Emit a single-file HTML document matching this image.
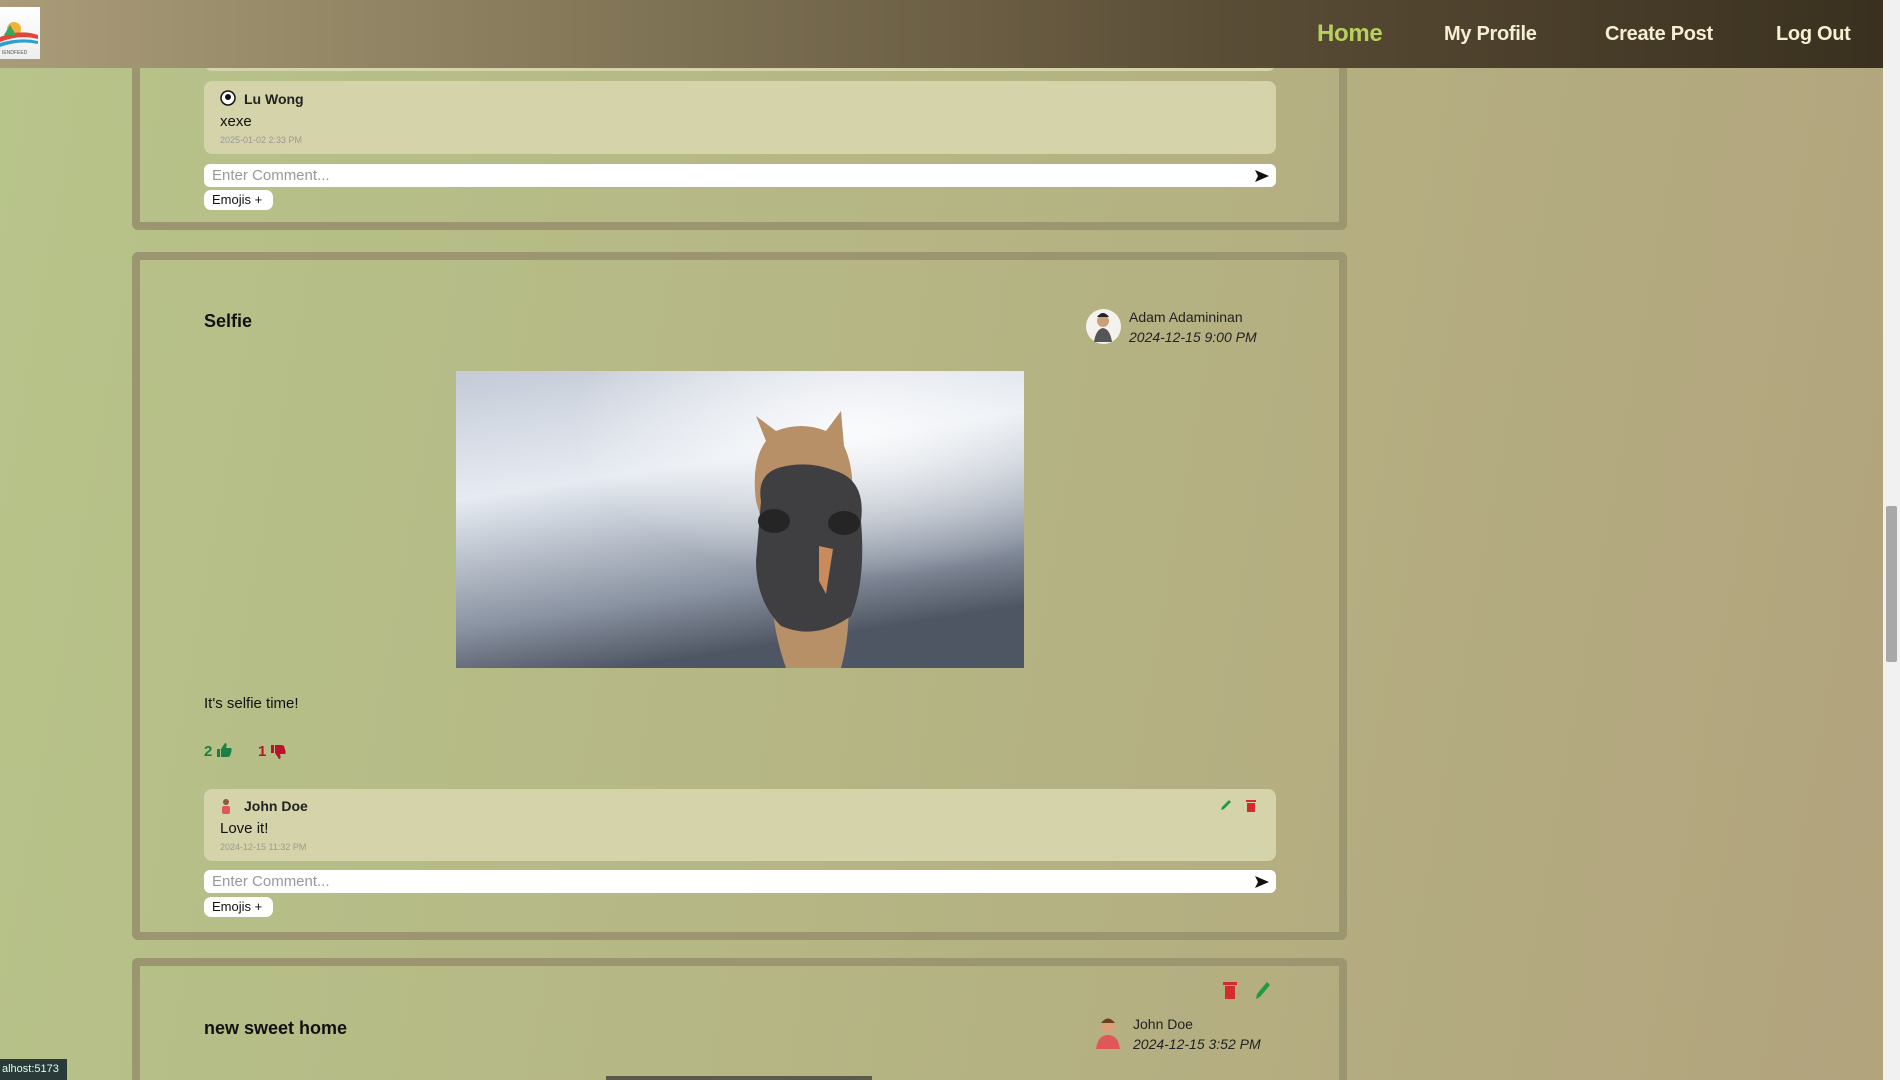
<!DOCTYPE html>
<html><head><meta charset="utf-8"><style>
*{margin:0;padding:0;box-sizing:border-box}
html,body{width:1900px;height:1080px;overflow:hidden}
body{font-family:"Liberation Sans",sans-serif;color:#111}
#w{position:relative;width:1900px;height:1080px;overflow:hidden;background:linear-gradient(100deg,#b7c48a 0%,#b5b684 45%,#b2a37d 100%)}
.nav{position:absolute;left:0;top:0;width:1883px;height:68px;z-index:10;background:linear-gradient(90deg,#aa9c79 0%,#85795a 30%,#5a4d36 65%,#3a301f 100%)}
.nav a{position:absolute;top:23px;font-size:20px;font-weight:bold;color:#f6f0d2;text-decoration:none;letter-spacing:-0.3px}
.logo{position:absolute;left:0;top:7px;width:40px;height:52px;background:linear-gradient(180deg,#fff,#eee)}
.sb{position:absolute;right:0;top:0;width:17px;height:1080px;background:#f1f1f1;z-index:11}
.thumb{position:absolute;left:3px;top:506px;width:11px;height:156px;background:#a8a8a8;border-radius:2px}
.card{position:absolute;left:132px;width:1215px;border:8px solid #9c9670;border-radius:6px}
.cbox{position:absolute;left:204px;width:1072px;background:#d4d3aa;border-radius:8px}
.cname{position:absolute;left:40px;font-size:14px;font-weight:bold;color:#222}
.ctext{position:absolute;left:16px;font-size:15px}
.cdate{position:absolute;left:16px;font-size:9px;color:#9a9a90}
.input{position:absolute;left:204px;width:1072px;height:23px;background:#fff;border-radius:6px;font-size:15px;color:#999;padding:3px 8px}
.input svg{position:absolute;right:6px;top:5px}
.emo{position:absolute;left:204px;width:69px;height:20px;background:#fff;border-radius:7px;font-size:13px;padding:2px 8px;color:#111}
.title{position:absolute;left:204px;font-size:18px;font-weight:bold}
.av{position:absolute;border-radius:50%;background:#f4f2ee}
.an{position:absolute;font-size:14px;color:#222}
.ad{position:absolute;font-size:14px;font-style:italic;color:#222}
</style></head><body><div id="w">
<div class="nav">
<div class="logo"><svg width="40" height="52"><circle cx="14" cy="22" r="7" fill="#f2b23a"/><path d="M0 30 Q20 22 38 28 L38 32 Q20 27 0 35Z" fill="#e0473a"/><path d="M0 36 Q20 30 38 34 L38 37 Q20 33 0 40Z" fill="#2d9fd0"/><path d="M4 28 L10 18 L16 28Z" fill="#3fa35a"/><text x="2" y="47" font-size="5" fill="#555">IENDFEED</text></svg></div>
<a style="left:1317px;color:#b7cf5c;font-size:24px;top:20px">Home</a>
<a style="left:1444px">My Profile</a>
<a style="left:1605px">Create Post</a>
<a style="left:1776px">Log Out</a>
</div>

<div class="card" style="top:-20px;height:250px"></div>
<div class="cbox" style="top:40px;height:31px"></div>
<div class="cbox" style="top:81px;height:73px">
<svg style="position:absolute;left:16px;top:9px" width="16" height="16"><circle cx="8" cy="8" r="7" fill="#fff" stroke="#111" stroke-width="1.5"/><circle cx="8" cy="7" r="3" fill="#111"/></svg>
<div class="cname" style="top:10px">Lu Wong</div>
<div class="ctext" style="top:32px">xexe</div>
<div class="cdate" style="top:54px">2025-01-02 2:33 PM</div>
</div>
<div class="input" style="top:164px">Enter Comment...<svg width="16" height="14"><path d="M1 1 L15 7 L1 13 L4 7Z" fill="#111"/></svg></div>
<div class="emo" style="top:190px">Emojis +</div>

<div class="card" style="top:252px;height:688px"></div>
<div class="title" style="top:311px">Selfie</div>
<div class="av" style="left:1086px;top:309px;width:35px;height:35px"><svg width="35" height="35"><circle cx="17" cy="12" r="6" fill="#c9a07a"/><path d="M11 8 Q17 0 23 8Z" fill="#222"/><path d="M8 33 Q10 20 17 19 Q24 20 26 33Z" fill="#555"/></svg></div>
<div class="an" style="left:1129px;top:309px">Adam Adamininan</div>
<div class="ad" style="left:1129px;top:329px">2024-12-15 9:00 PM</div>
<svg style="position:absolute;left:456px;top:371px" width="568" height="297"><defs><linearGradient id="s" x1="0" y1="0" x2="0.3" y2="1"><stop offset="0" stop-color="#c4cad6"/><stop offset=".4" stop-color="#e6ebf2"/><stop offset=".8" stop-color="#8a93a2"/><stop offset="1" stop-color="#4f5663"/></linearGradient><radialGradient id="c" cx=".7" cy=".2" r=".5"><stop offset="0" stop-color="#fff" stop-opacity=".8"/><stop offset="1" stop-color="#fff" stop-opacity="0"/></radialGradient></defs><rect width="568" height="297" fill="url(#s)"/><rect width="568" height="297" fill="url(#c)"/>
<path d="M330 297 Q310 240 320 200 L300 130 Q295 90 310 70 L300 45 L320 60 Q345 50 370 60 L385 40 L388 75 Q400 100 395 140 L392 220 Q395 260 385 297Z" fill="#b89068"/>
<path d="M305 130 Q300 100 330 95 Q355 90 380 100 Q410 110 405 150 Q410 210 395 245 Q360 270 325 255 Q300 230 300 190Z" fill="#3f3e40"/><ellipse cx="318" cy="150" rx="16" ry="12" fill="#262526"/><ellipse cx="388" cy="152" rx="16" ry="12" fill="#262526"/><path d="M363 175 L377 178 L370 223 L363 210Z" fill="#c98a5c"/></svg>
<div style="position:absolute;left:204px;top:695px;font-size:15px">It's selfie time!</div>
<div style="position:absolute;left:204px;top:743px;font-size:15px;font-weight:bold;color:#1e8040">2 <svg width="15" height="14" style="vertical-align:-1px"><path d="M0 6 H3 V14 H0Z M4 6 L8 0 Q10 0 9.5 3 L9 5 H14 Q15 6 14.5 8 L13 13 Q12 14 10 14 H4Z" fill="#1e8040"/></svg></div>
<div style="position:absolute;left:258px;top:743px;font-size:15px;font-weight:bold;color:#b8152a">1 <svg width="15" height="15" style="vertical-align:-4px"><path d="M0 0 H3 V8 H0Z M4 0 H10 Q12 0 13 1 L14.5 6 Q15 8 14 9 H9 L9.5 11 Q10 14 8 14 L4 8Z" fill="#b8152a"/></svg></div>
<div class="cbox" style="top:789px;height:72px">
<svg style="position:absolute;left:16px;top:9px" width="12" height="16"><circle cx="6" cy="4" r="3" fill="#8a5a3c"/><rect x="2" y="8" width="8" height="8" rx="2" fill="#e0575a"/></svg>
<div class="cname" style="top:9px">John Doe</div>
<div class="ctext" style="top:31px">Love it!</div>
<div class="cdate" style="top:53px">2024-12-15 11:32 PM</div>
<svg style="position:absolute;left:1016px;top:10px" width="12" height="12"><path d="M1 11 L2 8 L9 1 L11 3 L4 10Z" fill="#1f9b45"/></svg>
<svg style="position:absolute;left:1042px;top:10px" width="10" height="13"><rect x="0" y="1" width="10" height="2" fill="#d42c2c"/><rect x="1" y="4" width="8" height="9" fill="#d42c2c"/></svg>
</div>
<div class="input" style="top:870px">Enter Comment...<svg width="16" height="14"><path d="M1 1 L15 7 L1 13 L4 7Z" fill="#111"/></svg></div>
<div class="emo" style="top:897px">Emojis +</div>

<div class="card" style="top:958px;height:122px;border-bottom:none;border-radius:6px 6px 0 0"></div>
<svg style="position:absolute;left:1222px;top:980px" width="16" height="20"><rect x="1" y="2" width="14" height="3" fill="#d42c2c"/><rect x="3" y="6" width="10" height="13" fill="#d42c2c"/></svg>
<svg style="position:absolute;left:1254px;top:980px" width="18" height="20"><path d="M2 19 L3 14 L13 2 L16 5 L6 17Z" fill="#1f9b45"/></svg>
<div class="title" style="top:1018px">new sweet home</div>
<svg style="position:absolute;left:1094px;top:1015px" width="28" height="34"><circle cx="14" cy="11" r="7" fill="#d9a07a"/><path d="M7 8 Q14 -1 21 8Z" fill="#6b3e22"/><path d="M2 34 Q4 20 14 20 Q24 20 26 34Z" fill="#e0575a"/></svg>
<div class="an" style="left:1133px;top:1016px">John Doe</div>
<div class="ad" style="left:1133px;top:1036px">2024-12-15 3:52 PM</div>
<div style="position:absolute;left:606px;top:1076px;width:266px;height:4px;background:#5a5a48"></div>

<div style="position:absolute;left:0;top:1059px;width:67px;height:21px;background:#2a3a38;color:#dfe;font-size:11px;padding:4px 2px;z-index:12">alhost:5173</div>
<div class="sb"><div class="thumb"></div></div>
</div></body></html>
